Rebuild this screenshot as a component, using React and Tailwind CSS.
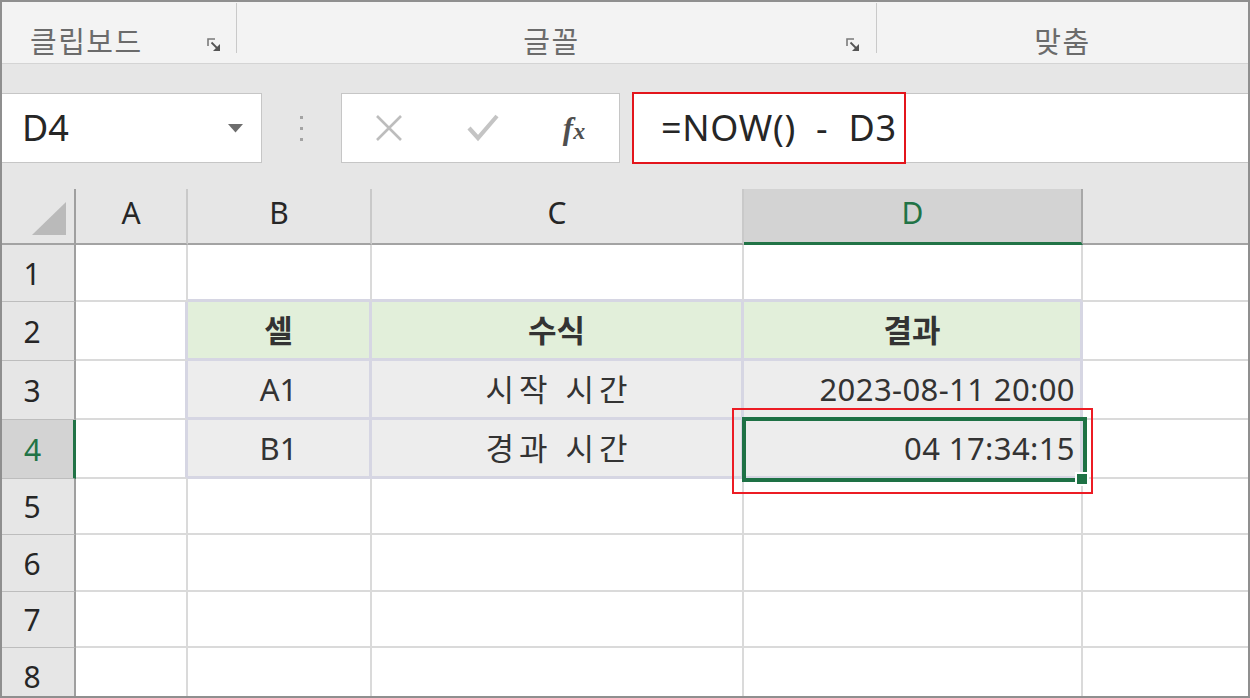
import React from 'react';

function Launcher() {
  return (
    <svg width="14" height="14" viewBox="0 0 14 14" className="shrink-0">
      <path d="M1 8 V1 H8" fill="none" stroke="#7a7a7a" strokeWidth="1.6" />
      <path d="M4.5 4.5 L10.5 10.5" stroke="#555" strokeWidth="1.8" />
      <polygon points="13,6 13,13 6,13" fill="#555" />
    </svg>
  );
}

function Ribbon() {
  return (
    <div className="h-[62px] shrink-0 bg-[#f3f3f3] border-b border-[#d4d4d4] flex text-[29px] tracking-[1.5px] leading-none text-[#6b6b6b]">
      <div className="w-[234px] flex items-end">
        <span className="pl-[28px] pb-[7px]">클립보드</span>
        <div className="flex-1" />
        <div className="mr-[15px] mb-[11px]">
          <Launcher />
        </div>
      </div>
      <div className="w-px h-[50px] mt-px bg-[#c9c9c9]" />
      <div className="w-[639px] flex items-end">
        <span className="flex-1 text-center pl-[20px] pb-[7px]">글꼴</span>
        <div className="mr-[16px] mb-[11px]">
          <Launcher />
        </div>
      </div>
      <div className="w-px h-[50px] mt-px bg-[#c9c9c9]" />
      <div className="flex-1 flex items-end justify-center">
        <span className="pb-[7px]">맞춤</span>
      </div>
    </div>
  );
}

function FormulaBar() {
  return (
    <div className="h-[125px] shrink-0 bg-[#e6e6e6] flex items-start pt-[29px]">
      <div className="w-[260px] h-[70px] bg-white border border-l-0 border-[#c6c6c6] flex items-center justify-between pl-[20px] pr-[18px]">
        <span className="text-[36px] leading-none text-[#262626]">D4</span>
        <svg width="15" height="9" viewBox="0 0 15 9">
          <polygon points="0,0 15,0 7.5,8.5" fill="#6d6d6d" />
        </svg>
      </div>
      <div className="w-[79px] h-[70px] flex flex-col items-center justify-center gap-[8px]">
        <div className="w-[3px] h-[3px] bg-[#a3a3a3]" />
        <div className="w-[3px] h-[3px] bg-[#a3a3a3]" />
        <div className="w-[3px] h-[3px] bg-[#a3a3a3]" />
      </div>
      <div className="w-[279px] h-[70px] bg-white border border-[#c6c6c6] flex items-center">
        <div className="w-[94px] flex justify-center">
          <svg width="28" height="28" viewBox="0 0 28 28">
            <path d="M2 2 L26 26 M26 2 L2 26" stroke="#bdbdbd" strokeWidth="2.6" />
          </svg>
        </div>
        <div className="w-[94px] flex justify-center">
          <svg width="32" height="30" viewBox="0 0 32 30">
            <path d="M2 15 L11 25 L30 3" fill="none" stroke="#c4c4c4" strokeWidth="4.2" />
          </svg>
        </div>
        <div className="w-[88px] flex justify-center">
          <span className="font-['Liberation_Serif',serif] italic font-bold text-[31px] leading-none text-[#4f4f4f]">
            f<span className="text-[24px]">x</span>
          </span>
        </div>
      </div>
      <div className="ml-[12px] flex-1 h-[70px] bg-white border border-r-0 border-[#c6c6c6] flex items-center pl-[28px] relative">
        <span className="text-[36px] leading-none tracking-[0.7px] text-[#262626] whitespace-pre">=NOW()  -  D3</span>
        <div className="absolute left-[-1px] top-[-2px] w-[274px] h-[72px] border-2 border-[#e3151c]" />
      </div>
    </div>
  );
}

const GRID = 'border-r-2 border-b-2 border-[#dadada]';
const TABLE = 'border-r-[3px] border-b-[3px] border-[#d6d6e3]';
const LEFT_OF_TABLE = 'border-r-[3px] border-r-[#d6d6e3] border-b-2 border-b-[#dadada]';
const ABOVE_TABLE = 'border-b-[3px] border-b-[#d6d6e3] border-r-2 border-r-[#dadada]';
const LAST = 'border-b-2 border-[#dadada]';

function RowHead({ n, active }) {
  if (active) {
    return (
      <div className="bg-[#d3d3d3] border-r-[3px] border-r-[#217346] border-b border-b-[#bdbdbd] flex items-center justify-center pr-[10px] text-[30px] text-[#217346]">
        {n}
      </div>
    );
  }
  return (
    <div className="bg-[#e6e6e6] border-r-2 border-r-[#9f9f9f] border-b border-b-[#bdbdbd] flex items-center justify-center pr-[12px] text-[30px] text-[#262626]">
      {n}
    </div>
  );
}

function ColHead({ children }) {
  return (
    <div className="bg-[#e6e6e6] border-r-2 border-r-[#c9c9c9] border-b-2 border-b-[#a3a3a3] flex items-center justify-center pb-[8px] text-[30px] text-[#262626]">
      {children}
    </div>
  );
}

function Sheet() {
  return (
    <div className="flex-1 min-h-0 grid grid-cols-[74px_112px_184px_372px_339px_1fr] grid-rows-[56px_57px_59px_59px_59px_56px_57px_56px_57px] text-[31px] text-[#333]">
      {/* header row */}
      <div className="bg-[#e6e6e6] border-r-2 border-r-[#9f9f9f] border-b-2 border-b-[#a3a3a3] flex items-end justify-end pr-[8px] pb-[8px]">
        <svg width="34" height="33" viewBox="0 0 34 33">
          <polygon points="34,0 34,33 0,33" fill="#bababa" />
        </svg>
      </div>
      <ColHead>A</ColHead>
      <ColHead>B</ColHead>
      <ColHead>C</ColHead>
      <div className="bg-[#d3d3d3] border-r-2 border-r-[#a8a8a8] border-b-[3px] border-b-[#217346] flex items-center justify-center pb-[7px] text-[30px] text-[#217346]">
        D
      </div>
      <div className="bg-[#e6e6e6] border-b-2 border-b-[#a3a3a3]" />

      {/* row 1 */}
      <RowHead n={1} />
      <div className={GRID} />
      <div className={ABOVE_TABLE} />
      <div className={ABOVE_TABLE} />
      <div className={ABOVE_TABLE} />
      <div className={LAST} />

      {/* row 2 */}
      <RowHead n={2} />
      <div className={LEFT_OF_TABLE} />
      <div className={`${TABLE} bg-[#e2efda] flex items-center justify-center font-bold`}>셀</div>
      <div className={`${TABLE} bg-[#e2efda] flex items-center justify-center font-bold`}>수식</div>
      <div className={`${TABLE} bg-[#e2efda] flex items-center justify-center font-bold`}>결과</div>
      <div className={LAST} />

      {/* row 3 */}
      <RowHead n={3} />
      <div className={LEFT_OF_TABLE} />
      <div className={`${TABLE} bg-[#ededed] flex items-center justify-center`}>A1</div>
      <div className={`${TABLE} bg-[#ededed] flex items-center justify-center tracking-[5px] pl-[5px]`}>시작 시간</div>
      <div className={`${TABLE} bg-[#ededed] flex items-center justify-end pr-[5px] tracking-[0.4px]`}>2023-08-11 20:00</div>
      <div className={LAST} />

      {/* row 4 */}
      <RowHead n={4} active />
      <div className={LEFT_OF_TABLE} />
      <div className={`${TABLE} bg-[#ededed] flex items-center justify-center`}>B1</div>
      <div className={`${TABLE} bg-[#ededed] flex items-center justify-center tracking-[5px] pl-[5px]`}>경과 시간</div>
      <div className={`${TABLE} bg-[#ededed] flex items-center justify-end pr-[5px] tracking-[0.4px] relative z-10`}>
        04 17:34:15
        <div className="absolute left-[-2px] top-[-3px] w-[345px] h-[65px] border-4 border-[#1e7145]" />
        <div className="absolute left-[331px] top-[52px] w-[14px] h-[14px] bg-[#1e7145] border-2 border-white" />
        <div className="absolute left-[-12px] top-[-12px] w-[361px] h-[86px] border-2 border-[#ec1c24]" />
      </div>
      <div className={LAST} />

      {[5, 6, 7, 8].map((n) => (
        <React.Fragment key={n}>
          <RowHead n={n} />
          <div className={GRID} />
          <div className={GRID} />
          <div className={GRID} />
          <div className={GRID} />
          <div className={LAST} />
        </React.Fragment>
      ))}
    </div>
  );
}

export default function App() {
  return (
    <div className="w-[1250px] h-[698px] overflow-hidden border-2 border-[#8f8f8f] bg-white flex flex-col font-['Noto_Sans','Noto_Sans_CJK_KR',sans-serif]">
      <Ribbon />
      <FormulaBar />
      <Sheet />
    </div>
  );
}
